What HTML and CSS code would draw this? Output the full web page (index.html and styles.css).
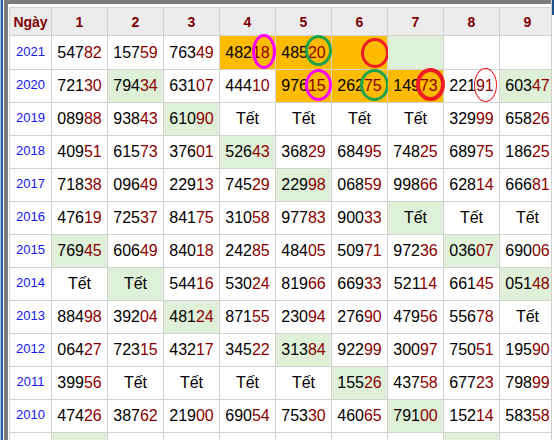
FILE: index.html
```html
<!DOCTYPE html>
<html lang="vi">
<head>
<meta charset="utf-8">
<title>Ngày</title>
<link rel="stylesheet" href="styles.css">
</head>
<body>
<div class="screen">
  <div class="edge-l"></div>
  <div class="panel">
    <table class="grid">
      <colgroup><col class="c-year"><col><col><col><col><col><col><col><col><col></colgroup>
      <thead>
        <tr class="head"><th>Ngày</th><th>1</th><th>2</th><th>3</th><th>4</th><th>5</th><th>6</th><th>7</th><th>8</th><th>9</th></tr>
      </thead>
      <tbody>
        <tr class="first">
          <td class="y">2021</td>
          <td>547<b>82</b></td><td>157<b>59</b></td><td>763<b>49</b></td>
          <td class="or">482<b>18</b><span class="ring r-mag a1"></span></td>
          <td class="or">485<b>20</b><span class="ring r-grn a2"></span></td>
          <td class="or"><span class="ring r-red a3"></span></td>
          <td class="gr"></td><td></td><td></td>
        </tr>
        <tr>
          <td class="y">2020</td>
          <td>721<b>30</b></td><td class="gr">794<b>34</b></td><td>631<b>07</b></td><td>444<b>10</b></td>
          <td class="or">976<b>15</b><span class="ring r-mag a4"></span></td>
          <td class="or">262<b>75</b><span class="ring r-grn a5"></span></td>
          <td class="or">149<b>73</b><span class="ring r-red a6"></span></td>
          <td>221<b>91</b><span class="ring r-thin a7"></span></td>
          <td class="gr">603<b>47</b></td>
        </tr>
        <tr>
          <td class="y">2019</td>
          <td>089<b>88</b></td><td>938<b>43</b></td><td class="gr">610<b>90</b></td><td>Tết</td><td>Tết</td><td>Tết</td><td>Tết</td><td>329<b>99</b></td><td>658<b>26</b></td>
        </tr>
        <tr>
          <td class="y">2018</td>
          <td>409<b>51</b></td><td>615<b>73</b></td><td>376<b>01</b></td><td class="gr">526<b>43</b></td><td>368<b>29</b></td><td>684<b>95</b></td><td>748<b>25</b></td><td>689<b>75</b></td><td>186<b>25</b></td>
        </tr>
        <tr>
          <td class="y">2017</td>
          <td>718<b>38</b></td><td>096<b>49</b></td><td>229<b>13</b></td><td>745<b>29</b></td><td class="gr">229<b>98</b></td><td>068<b>59</b></td><td>998<b>66</b></td><td>628<b>14</b></td><td>666<b>81</b></td>
        </tr>
        <tr>
          <td class="y">2016</td>
          <td>476<b>19</b></td><td>725<b>37</b></td><td>841<b>75</b></td><td>310<b>58</b></td><td>977<b>83</b></td><td>900<b>33</b></td><td class="gr">Tết</td><td>Tết</td><td>Tết</td>
        </tr>
        <tr>
          <td class="y">2015</td>
          <td class="gr">769<b>45</b></td><td>606<b>49</b></td><td>840<b>18</b></td><td>242<b>85</b></td><td>484<b>05</b></td><td>509<b>71</b></td><td>972<b>36</b></td><td class="gr">036<b>07</b></td><td>690<b>06</b></td>
        </tr>
        <tr>
          <td class="y">2014</td>
          <td>Tết</td><td class="gr">Tết</td><td>544<b>16</b></td><td>530<b>24</b></td><td>819<b>66</b></td><td>669<b>33</b></td><td>521<b>14</b></td><td>661<b>45</b></td><td class="gr">051<b>48</b></td>
        </tr>
        <tr>
          <td class="y">2013</td>
          <td>884<b>98</b></td><td>392<b>04</b></td><td class="gr">481<b>24</b></td><td>871<b>55</b></td><td>230<b>94</b></td><td>276<b>90</b></td><td>479<b>56</b></td><td>556<b>78</b></td><td>Tết</td>
        </tr>
        <tr>
          <td class="y">2012</td>
          <td>064<b>27</b></td><td>723<b>15</b></td><td>432<b>17</b></td><td>345<b>22</b></td><td class="gr">313<b>84</b></td><td>922<b>99</b></td><td>300<b>97</b></td><td>750<b>51</b></td><td>195<b>90</b></td>
        </tr>
        <tr>
          <td class="y">2011</td>
          <td>399<b>56</b></td><td>Tết</td><td>Tết</td><td>Tết</td><td>Tết</td><td class="gr">155<b>26</b></td><td>437<b>58</b></td><td>677<b>23</b></td><td>798<b>99</b></td>
        </tr>
        <tr>
          <td class="y">2010</td>
          <td>474<b>26</b></td><td>387<b>62</b></td><td>219<b>00</b></td><td>690<b>54</b></td><td>753<b>30</b></td><td>460<b>65</b></td><td class="gr">791<b>00</b></td><td>152<b>14</b></td><td>583<b>58</b></td>
        </tr>
        <tr class="tail">
          <td class="y"></td>
          <td class="gr"></td><td></td><td></td><td></td><td></td><td></td><td></td><td class="gr"></td><td></td>
        </tr>
      </tbody>
    </table>
  </div>
  <div class="edge-r"></div>
</div>
</body>
</html>
```

FILE: styles.css
```css
html, body {
  margin: 0;
  padding: 0;
  background: #ffffff;
}

.screen {
  display: flex;
  width: 554px;
  height: 440px;
  overflow: hidden;
  background: #ffffff;
}

.edge-l {
  flex: none;
  width: 4px;
  background: linear-gradient(to right, #a7c4e2 0 1px, #1f5ea4 1px 3px, #ffffff 3px 4px);
}

.panel {
  flex: 1;
  min-width: 0;
  overflow: hidden;
  border-top: 4px solid #7b7b7b;
  border-left: 4px solid #7b7b7b;
  padding: 3px 0 0 0;
}

.edge-r {
  flex: none;
  width: 2px;
  border-left: 1px solid #cfcfcf;
  background: linear-gradient(#1e4f86 0 15px, #ffffff 15px);
}

.grid {
  border-collapse: collapse;
  table-layout: fixed;
  width: 546px;
  margin-left: 1px;
  font-family: "Liberation Sans", Arial, sans-serif;
  font-size: 16px;
  color: #000000;
}

.grid col { width: 56px; }
.grid col.c-year { width: 42px; }

.grid th,
.grid td {
  border: 1px solid #d2d2d2;
  padding: 0;
  text-align: center;
  vertical-align: middle;
  white-space: nowrap;
  position: relative;
}

.grid tr.head { height: 28px; }
.grid th {
  background: #ececec;
  color: #800000;
  font-size: 14px;
  font-weight: bold;
}

.grid tbody tr { height: 33px; }
.grid tbody tr.first { height: 34px; }

.grid td b {
  font-weight: normal;
  color: #8b0000;
}

.grid td.y {
  color: #1515f0;
  font-size: 13px;
  padding-bottom: 3px;
}

.grid td.or { background: #ffbb00; }
.grid td.gr { background: #dff0d8; }

.ring {
  position: absolute;
  box-sizing: border-box;
  border-radius: 50%;
  pointer-events: none;
}

.r-mag { border: 3px solid #ff00ff; }
.r-grn { border: 3px solid #1fa34a; }
.r-red { border: 3px solid #ee1c24; }
.r-thin { border: 1px solid #ee1c24; }

.a1 { left: 32px; top: -2px; width: 24px; height: 35px; }
.a2 { left: 29px; top: -1px; width: 27px; height: 31px; }
.a3 { left: 29px; top: 2px; width: 28px; height: 30px; }
.a4 { left: 29px; top: -1px; width: 27px; height: 32px; }
.a5 { left: 28px; top: -1px; width: 29px; height: 32px; }
.a6 { left: 28px; top: -2px; width: 29px; height: 33px; border-width: 4px; }
.a7 { left: 30px; top: -2px; width: 23px; height: 34px; }
```
